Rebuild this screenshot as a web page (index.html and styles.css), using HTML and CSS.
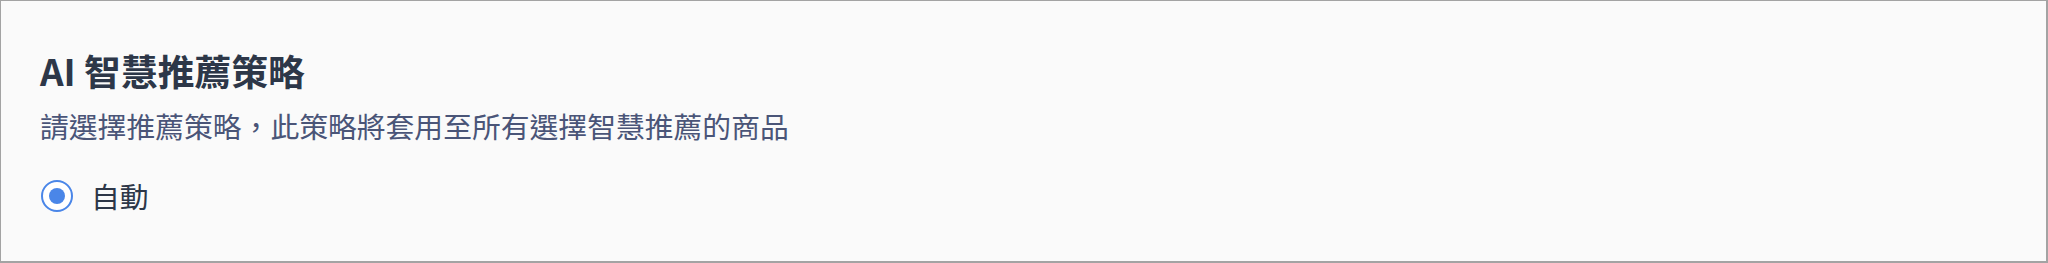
FILE: index.html
```html
<!DOCTYPE html>
<html lang="zh-Hant">
<head>
<meta charset="utf-8">
<title>AI 智慧推薦策略</title>
<link rel="stylesheet" href="styles.css">
</head>
<body>
  <section class="card">
    <h2 class="card-title">AI 智慧推薦策略</h2>
    <p class="card-desc">請選擇推薦策略，此策略將套用至所有選擇智慧推薦的商品</p>
    <div class="options">
      <label class="option">
        <input class="radio" type="radio" name="strategy" checked>
        <span class="option-label">自動</span>
      </label>
    </div>
  </section>
</body>
</html>
```

FILE: styles.css
```css
html, body {
  margin: 0;
  padding: 0;
  background: #fafafa;
}

body {
  font-family: "Noto Sans CJK TC", "Noto Sans", sans-serif;
}

.card {
  box-sizing: border-box;
  width: 2048px;
  height: 263px;
  border: 1px solid #a3a3a3;
  border-right-width: 2px;
  border-bottom-width: 2px;
  background: #fafafa;
  padding: 46px 39px 0 39px;
  display: flex;
  flex-direction: column;
}

.card-title {
  margin: 0;
  font-size: 36.8px;
  line-height: 46px;
  font-weight: 700;
  color: #2d3748;
}

.card-desc {
  margin: 11px 0 0 0;
  font-size: 28.8px;
  line-height: 43px;
  font-weight: 400;
  color: #4a5578;
}

.options {
  margin-top: 27px;
  display: flex;
  flex-direction: column;
}

.option {
  display: flex;
  align-items: center;
  gap: 18px;
  height: 43px;
  cursor: pointer;
}

.radio {
  appearance: none;
  -webkit-appearance: none;
  margin: 0 0 0 1px;
  box-sizing: border-box;
  width: 32px;
  height: 32px;
  border-radius: 50%;
  border: 2.5px solid #4a86e8;
  background: #ffffff;
  display: grid;
  place-content: center;
}

.radio::before {
  content: "";
  width: 16px;
  height: 16px;
  border-radius: 50%;
  background: #4a86e8;
}

.option-label {
  font-size: 28.8px;
  line-height: 43px;
  color: #2d3748;
}
```
